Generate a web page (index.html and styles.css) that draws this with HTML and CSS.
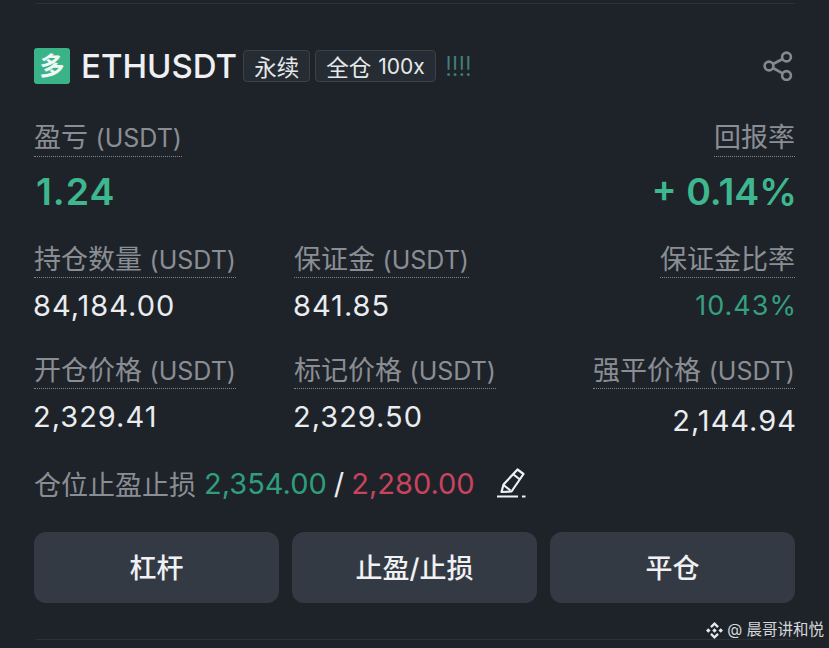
FILE: index.html
```html
<!DOCTYPE html>
<html lang="zh-CN">
<head>
    <meta charset="UTF-8">
    <title>ETHUSDT</title>
    <link rel="stylesheet" href="styles.css">
</head>
<body>

<div class="card">
    <div class="header">
        <span class="side">多</span>
        <span class="symbol">ETHUSDT</span>
        <span class="tag tag-perp">永续</span>
        <span class="tag tag-margin">全仓 <em>100x</em></span>
        <span class="risk">!!!!</span>
        <svg class="share" width="30" height="30" viewBox="0 0 30 30" fill="none" stroke="#85888d" stroke-width="2.6">
            <circle cx="6" cy="15" r="4.4"/>
            <circle cx="23.5" cy="6" r="4.4"/>
            <circle cx="23.5" cy="24.5" r="4.4"/>
            <path d="M10 13 19.6 8M10 17l9.6 5.4"/>
        </svg>
    </div>

    <div class="pnl">
        <div class="cell">
            <span class="label">盈亏 <small>(USDT)</small></span>
            <span class="big green pnl-amount">1.24</span>
        </div>
        <div class="cell right">
            <span class="label">回报率</span>
            <span class="big green">+ 0.14%</span>
        </div>
    </div>

    <div class="row row-margin">
        <div class="cell">
            <span class="label">持仓数量 <small>(USDT)</small></span>
            <span class="value">84,184.00</span>
        </div>
        <div class="cell">
            <span class="label">保证金 <small>(USDT)</small></span>
            <span class="value">841.85</span>
        </div>
        <div class="cell right">
            <span class="label">保证金比率</span>
            <span class="value green-soft">10.43%</span>
        </div>
    </div>

    <div class="row row-price">
        <div class="cell">
            <span class="label">开仓价格 <small>(USDT)</small></span>
            <span class="value">2,329.41</span>
        </div>
        <div class="cell">
            <span class="label">标记价格 <small>(USDT)</small></span>
            <span class="value">2,329.50</span>
        </div>
        <div class="cell right">
            <span class="label">强平价格 <small>(USDT)</small></span>
            <span class="value low">2,144.94</span>
        </div>
    </div>

    <div class="tpsl">
        <span class="tpsl-name">仓位止盈止损</span>
        <span class="tp">2,354.00</span>
        <span class="slash">/</span>
        <span class="sl">2,280.00</span>
        <svg class="edit" width="30" height="32" viewBox="0 0 30 32" fill="none" stroke="#eef0f2" stroke-width="2.2" stroke-linejoin="round">
            <path d="M21.5 2.5 27.5 7 15.5 24.5 5.5 25 7.5 17.5Z"/>
            <path d="M17.5 7.5 24 12.5M7.5 18l7 5.5"/>
            <path d="M1 29.5H22M26 29.5H29.5"/>
        </svg>
    </div>

    <div class="actions">
        <button class="action">杠杆</button>
        <button class="action">止盈/止损</button>
        <button class="action">平仓</button>
    </div>

    <div class="watermark">
        <svg width="17" height="17" viewBox="0 0 18 18" fill="#e6e8ea">
            <path d="M9 0 13.6 4.6 11.9 6.3 9 3.4 6.1 6.3 4.4 4.6ZM2.400 6.600 4.800 9 2.400 11.400 0 9ZM15.600 6.600 18 9 15.600 11.400 13.200 9ZM9 18 4.400 13.400 6.100 11.700 9 14.600 11.900 11.700 13.600 13.400ZM9 6.600 11.400 9 9 11.400 6.600 9Z"/>
        </svg>
        <span>@ 晨哥讲和悦</span>
    </div>
</div>

</body>
</html>
```

FILE: styles.css
```css
* {
    box-sizing: border-box;
}
body {
    margin: 0;
    background-color: #1e2329;
    color: #eaecef;
    font-family: 'Inter', 'Noto Sans CJK SC', sans-serif;
}
.card {
    position: relative;
    width: 829px;
    height: 648px;
    padding: 48px 34px 0 34px;
    overflow: hidden;
}
.card::before,
.card::after {
    content: "";
    position: absolute;
    left: 36px;
    right: 34px;
    height: 1px;
    background-color: #2b3139;
}
.card::before {
    top: 3px;
}
.card::after {
    top: 639px;
}
.header {
    display: flex;
    align-items: center;
    height: 36px;
}
.side {
    width: 36px;
    height: 36px;
    border-radius: 3px;
    background-color: #3bb389;
    color: #eef8f4;
    font-size: 25px;
    font-weight: 700;
    line-height: 36px;
    text-align: center;
}
.symbol {
    margin-left: 11px;
    font-size: 33px;
    font-weight: 500;
    color: #eef0f3;
}
.tag {
    display: flex;
    align-items: center;
    height: 32px;
    margin-left: 5px;
    padding: 0 10px;
    border: 1px solid #3a4149;
    border-radius: 4px;
    background-color: #262c33;
    font-size: 22.5px;
    color: #e6e8ea;
}
.tag-perp {
    margin-left: 6px;
}
.tag-margin {
    gap: 7px;
}
.tag em {
    font-style: normal;
    font-size: 21px;
}
.risk {
    margin-left: 9px;
    font-size: 27px;
    font-weight: 300;
    color: #43807a;
    letter-spacing: -1px;
}
.share {
    margin-left: auto;
    margin-right: 2px;
}
.pnl {
    display: flex;
    justify-content: space-between;
    margin-top: 39px;
}
.cell {
    display: flex;
    flex-direction: column;
    align-items: flex-start;
}
.cell.right {
    align-items: flex-end;
}
.label {
    height: 34px;
    border-bottom: 1px dotted #7f858c;
    color: #8a8e94;
    font-size: 27px;
    line-height: 29px;
    white-space: nowrap;
}
.label small {
    font-size: 25px;
}
.big {
    margin-top: 14px;
    font-size: 37.5px;
    font-weight: 600;
    line-height: 42px;
}
.cell.right .big {
    margin-right: -2px;
}
.pnl-amount {
    margin-left: 2px;
    letter-spacing: 1px;
}
.green {
    color: #3eb78f;
}
.row {
    display: grid;
    grid-template-columns: 260px 1fr auto;
}
.row-margin {
    margin-top: 32px;
}
.row-margin .label,
.row-price .label {
    height: 33px;
}
.row-price {
    margin-top: 33px;
}
.value {
    margin-top: 11px;
    margin-left: -1px;
    font-size: 29px;
    letter-spacing: 1px;
    line-height: 34px;
    color: #eaecef;
}
.cell.right .value {
    margin-right: -2px;
}
.green-soft {
    color: #359f7f;
    font-size: 27px;
}
.low {
    margin-top: 15px;
}
.row-price .value:not(.low) {
    margin-top: 11px;
}
.tpsl {
    display: flex;
    align-items: center;
    height: 36px;
    margin-top: 27px;
    font-size: 29px;
}
.tpsl-name {
    color: #8a8e94;
    font-size: 27px;
}
.tp {
    margin-left: 8px;
    color: #2f9e7c;
}
.slash {
    margin: 0 7px;
    color: #eaecef;
}
.sl {
    color: #c9435f;
}
.edit {
    margin-left: 21px;
}
.actions {
    display: grid;
    grid-template-columns: repeat(3, 1fr);
    gap: 13px;
    margin-top: 31px;
}
.action {
    height: 71px;
    padding-bottom: 3px;
    border: none;
    border-radius: 12px;
    background-color: #343a44;
    color: #f0f1f3;
    font-family: inherit;
    font-size: 27px;
    font-weight: 500;
}
.watermark {
    position: absolute;
    right: 5px;
    top: 621px;
    display: flex;
    align-items: center;
    gap: 4px;
    color: #d5d7da;
    font-size: 15.5px;
    line-height: 18px;
}
```
